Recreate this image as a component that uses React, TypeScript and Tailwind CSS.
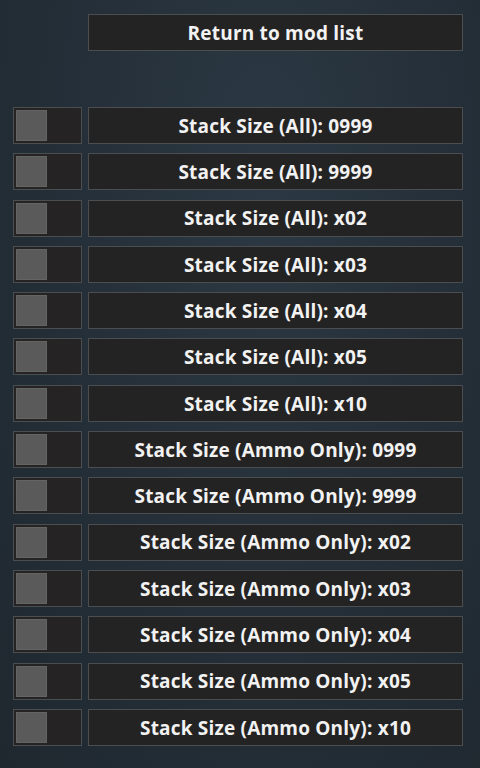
import React from "react";

const items = [
  "Stack Size (All): 0999",
  "Stack Size (All): 9999",
  "Stack Size (All): x02",
  "Stack Size (All): x03",
  "Stack Size (All): x04",
  "Stack Size (All): x05",
  "Stack Size (All): x10",
  "Stack Size (Ammo Only): 0999",
  "Stack Size (Ammo Only): 9999",
  "Stack Size (Ammo Only): x02",
  "Stack Size (Ammo Only): x03",
  "Stack Size (Ammo Only): x04",
  "Stack Size (Ammo Only): x05",
  "Stack Size (Ammo Only): x10",
];

export default function App() {
  return (
    <div
      className="w-[480px] h-[768px] overflow-hidden bg-[#25303a] bg-[radial-gradient(ellipse_at_55%_25%,#2c3843_0%,#25303a_45%,#1f282f_100%)] pl-[13px] pt-[14px]"
      style={{ fontFamily: '"Open Sans", "Noto Sans", sans-serif' }}
    >
      <div className="flex">
        <div className="w-[75px]" />
        <button className="w-[375px] h-[37px] bg-[#242323] border border-[#4b4e51] text-[#f2f2f2] font-bold text-[19px] tracking-[0.2px] flex items-center justify-center pt-[1px]">
          Return to mod list
        </button>
      </div>
      <div className="mt-[56px] flex flex-col gap-[9.3px]">
        {items.map((t) => (
          <div key={t} className="flex gap-[6px] h-[37px]">
            <div className="w-[69px] h-[37px] bg-[#252323] border border-[#4b4e51] pl-[2px] flex items-center">
              <div className="w-[31px] h-[31px] bg-[#5a5a5a] border border-[#646464]" />
            </div>
            <button className="w-[375px] h-[37px] bg-[#242323] border border-[#4b4e51] text-[#f2f2f2] font-bold text-[19px] tracking-[0.2px] flex items-center justify-center pt-[1px]">
              {t}
            </button>
          </div>
        ))}
      </div>
    </div>
  );
}
